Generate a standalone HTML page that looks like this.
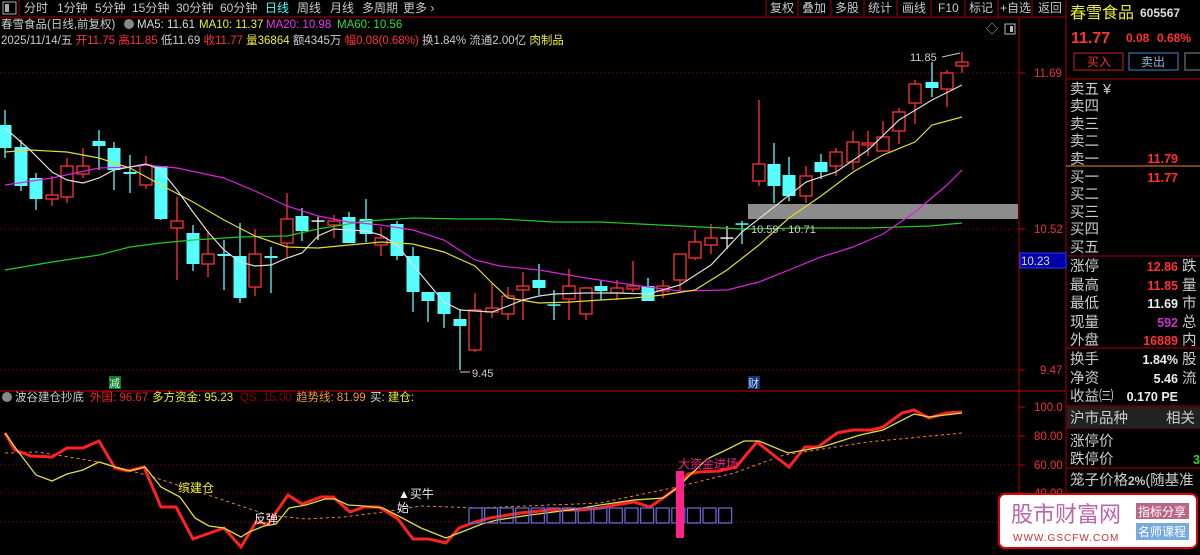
<!DOCTYPE html>
<html><head><meta charset="utf-8"><style>
body{margin:0;background:#000;width:1200px;height:550px;overflow:hidden;font-family:"Liberation Sans","Noto Sans CJK SC",sans-serif;}
svg text{font-family:"Liberation Sans","Noto Sans CJK SC",sans-serif;}
</style></head><body>
<svg id="s" width="1200" height="550" xmlns="http://www.w3.org/2000/svg">
<rect width="1200" height="550" fill="#000"/>
<g font-size="12" fill="#c8c8c8">
<rect x="3" y="2" width="13" height="12" fill="none" stroke="#aaa"/><rect x="5" y="4" width="4" height="8" fill="#aaa"/>
<line x1="19" y1="0" x2="19" y2="16" stroke="#a00"/>
<text x="24" y="12">分时</text><text x="57" y="12">1分钟</text><text x="95" y="12">5分钟</text><text x="132" y="12">15分钟</text><text x="176" y="12">30分钟</text><text x="220" y="12">60分钟</text><text x="265" y="12" fill="#4ff">日线</text><text x="297" y="12">周线</text><text x="330" y="12">月线</text><text x="362" y="12">多周期</text><text x="403" y="12">更多 ›</text>
<g stroke="#a00"><line x1="766" y1="0" x2="766" y2="16"/><line x1="798" y1="0" x2="798" y2="16"/><line x1="831" y1="0" x2="831" y2="16"/><line x1="864" y1="0" x2="864" y2="16"/><line x1="897" y1="0" x2="897" y2="16"/><line x1="931" y1="0" x2="931" y2="16"/><line x1="965" y1="0" x2="965" y2="16"/><line x1="998" y1="0" x2="998" y2="16"/><line x1="1032" y1="0" x2="1032" y2="16"/><line x1="1066" y1="0" x2="1066" y2="550"/></g>
<text x="770" y="12">复权</text><text x="802" y="12">叠加</text><text x="835" y="12">多股</text><text x="868" y="12">统计</text><text x="902" y="12">画线</text><text x="938" y="12">F10</text><text x="969" y="12">标记</text><text x="1000" y="12">+自选</text><text x="1038" y="12">返回</text>
</g>
<line x1="0" y1="17" x2="1066" y2="17" stroke="#a00"/>
<g font-size="11.5">
<text x="1" y="28" fill="#ccc">春雪食品(日线,前复权)</text>
<circle cx="129" cy="24" r="5" fill="#888"/>
<text x="137" y="28" fill="#ddd">MA5: 11.61</text><text x="199" y="28" fill="#ee3">MA10: 11.37</text><text x="266" y="28" fill="#e3e">MA20: 10.98</text><text x="337" y="28" fill="#3d3">MA60: 10.56</text>
<text x="1" y="44" fill="#ccc">2025/11/14/五 <tspan fill="#f33">开11.75</tspan> <tspan fill="#f33">高11.85</tspan> 低11.69 <tspan fill="#f33">收11.77</tspan> <tspan fill="#ee3">量36864</tspan> 额4345万 <tspan fill="#f33">幅0.08(0.68%)</tspan> 换1.84% 流通2.00亿 <tspan fill="#ee3">肉制品</tspan></text>
</g>
<text x="986" y="33" fill="#bbb" font-size="12">◇</text>
<rect x="1005" y="24" width="10" height="10" fill="none" stroke="#bbb"/><rect x="1010" y="26" width="3" height="6" fill="#bbb"/>
<line x1="1019" y1="17" x2="1019" y2="550" stroke="#a00"/>
<line x1="0" y1="391" x2="1066" y2="391" stroke="#c00"/>
<g stroke="#a00" stroke-dasharray="1,3">
<line x1="0" y1="73" x2="1019" y2="73"/><line x1="0" y1="229" x2="1019" y2="229"/><line x1="0" y1="370" x2="1019" y2="370"/>
<line x1="0" y1="436" x2="1019" y2="436"/><line x1="0" y1="465" x2="1019" y2="465"/><line x1="0" y1="493" x2="1019" y2="493"/><line x1="0" y1="522" x2="1019" y2="522"/>
</g>
<g stroke="#c00"><line x1="1019" y1="73" x2="1025" y2="73"/><line x1="1019" y1="229" x2="1025" y2="229"/><line x1="1019" y1="370" x2="1025" y2="370"/><line x1="1019" y1="407" x2="1025" y2="407"/><line x1="1019" y1="436" x2="1025" y2="436"/><line x1="1019" y1="465" x2="1025" y2="465"/><line x1="1019" y1="493" x2="1025" y2="493"/></g>
<g font-size="11.5" fill="#e33"><text x="1034" y="77">11.69</text><text x="1034" y="233">10.52</text><text x="1040" y="374">9.47</text>
<text x="1034" y="411">100.0</text><text x="1034" y="440">80.00</text><text x="1034" y="469">60.00</text><text x="1034" y="497">40.00</text></g>
<rect x="1020" y="253" width="46" height="15" fill="#00a" stroke="#33f"/><text x="1021" y="265" fill="#ddd" font-size="11.5">10.23</text>
<rect x="748" y="204" width="270" height="15" fill="#8c8c8c"/>
<g id="cand"></g>
<g id="ma" fill="none" stroke-width="1.2">
<polyline stroke="#2c2" points="5,270 52,262 99,255 130,247 161,243 193,240 240,237 287,236 318,229 366,221 413,218 460,219 500,219 554,222 600,222 680,226 742,229 806,228 868,228 930,226 962,223"/>
<polyline stroke="#d2d" points="5,185 52,178 99,168 130,167 146,165 177,168 224,178 255,191 287,206 318,216 349,222 381,225 413,230 444,240 475,260 500,266 539,270 586,278 633,285 680,291 727,290 759,282 789,270 821,257 853,247 883,234 915,212 947,185 962,170"/>
<polyline stroke="#dd3" points="5,152 30,150 67,152 99,158 130,168 161,185 193,202 224,220 255,236 287,247 318,248 349,245 381,242 413,244 444,252 475,266 492,283 508,298 539,303 570,302 601,300 633,298 663,295 695,290 727,270 759,245 789,218 821,196 853,172 883,155 915,142 932,125 962,117"/>
<polyline stroke="#ddd" points="5,128 30,150 52,172 67,180 83,183 99,178 114,170 130,167 146,164 161,170 177,190 193,212 208,232 224,250 240,262 255,266 271,265 287,258 302,253 318,236 334,229 349,230 366,231 381,235 397,245 413,265 428,283 444,302 460,310 475,311 492,312 508,306 523,300 539,296 554,294 586,293 617,293 648,294 680,285 711,265 742,232 774,207 806,182 836,172 868,150 899,120 932,100 962,85"/>
</g>
<g font-size="11" fill="#ccc">
<text x="751" y="233">10.59 - 10.71</text>
<text x="910" y="61">11.85</text><line x1="942" y1="57" x2="960" y2="53" stroke="#ccc"/>
<text x="472" y="377">9.45</text><line x1="460" y1="372" x2="470" y2="372" stroke="#ccc"/>
</g>
<rect x="109" y="376" width="12" height="13" fill="#173"/><text x="109" y="387" fill="#cfc" font-size="11">减</text>
<rect x="748" y="376" width="12" height="13" fill="#137"/><text x="748" y="387" fill="#cdf" font-size="11">财</text>
<circle cx="7" cy="397" r="5" fill="#888"/>
<g font-size="11.5"><text x="15" y="401" fill="#ccc">波谷建仓抄底</text><text x="90" y="401" fill="#e22">外国: 96.67</text><text x="152" y="401" fill="#ee3">多方资金: 95.23</text><text x="240" y="401" fill="#800">QS: 15.00</text><text x="296" y="401" fill="#e93">趋势线: 81.99</text><text x="370" y="401" fill="#ddd">买: <tspan fill="#ee3">建仓:</tspan></text></g>
<g fill="none">
<polyline stroke="#e82" stroke-dasharray="3,3" points="5,453 38,452 99,462 153,477 214,497 268,515 306,519 344,517 383,512 421,506 478,508 600,503 677,487 734,473 784,455 868,442 962,433"/>
<polyline stroke="#f22" stroke-width="3" points="5,433 15,450 31,456 52,457 67,448 83,448 99,441 115,468 128,471 144,467 161,507 176,507 193,539 207,534 224,528 241,547 256,522 268,524 288,495 302,504 321,497 333,497 350,512 364,507 379,507 398,519 413,539 429,539 446,543 459,528 475,522 490,518 520,513 550,510 580,510 600,508 615,505 634,502 650,507 663,498 678,487 688,474 699,472 719,471 736,467 757,442 776,457 789,467 805,447 818,447 837,433 853,430 872,430 883,427 902,413 914,410 929,418 946,413 962,412"/>
<polyline stroke="#dd4" stroke-width="1.3" points="5,433 17,450 36,475 52,481 67,474 83,470 99,462 115,467 130,471 145,467 161,487 180,497 195,518 209,526 224,528 241,537 249,532 264,526 276,524 289,508 306,505 325,499 335,499 348,505 364,506 383,508 406,520 421,528 446,538 459,533 482,524 497,520 530,515 570,510 600,505 634,500 663,498 677,488 688,477 707,459 726,450 744,441 759,441 788,453 822,447 860,435 883,430 914,414 929,417 962,413"/>
</g>
<g id="sq" fill="none" stroke="#66c" stroke-width="1.3"></g>
<rect x="676" y="471" width="8" height="67" fill="#f28"/>
<g font-size="12"><text x="678" y="468" fill="#e28">大资金进场</text><text x="178" y="492" fill="#ee3">缤建仓</text><text x="254" y="523" fill="#eee">反弹</text><text x="398" y="498" fill="#eee">▲买牛</text><text x="397" y="512" fill="#eee">始</text></g>
<g font-size="15"><text x="1070" y="18" fill="#ee3" font-size="16">春雪食品</text><text x="1140" y="17" fill="#ddd" font-size="12" font-weight="bold">605567</text>
<text x="1071" y="43" fill="#f33" font-size="16" font-weight="bold">11.77</text><text x="1126" y="42" fill="#f33" font-size="12" font-weight="bold">0.08</text><text x="1157" y="42" fill="#f33" font-size="12" font-weight="bold">0.68%</text></g>
<rect x="1074" y="53" width="49" height="17" fill="none" stroke="#c22"/><text x="1087" y="66" fill="#e33" font-size="12">买入</text>
<rect x="1129" y="53" width="49" height="17" fill="none" stroke="#48c"/><text x="1141" y="66" fill="#8bd" font-size="12">卖出</text>
<rect x="1185" y="53" width="20" height="17" fill="none" stroke="#888"/>
<g stroke="#a00"><line x1="1066" y1="79" x2="1200" y2="79"/><line x1="1066" y1="256" x2="1200" y2="256"/><line x1="1066" y1="348" x2="1200" y2="348"/><line x1="1066" y1="406" x2="1200" y2="406"/><line x1="1066" y1="428" x2="1200" y2="428"/><line x1="1066" y1="468" x2="1200" y2="468"/></g>
<line x1="1066" y1="166" x2="1200" y2="166" stroke="#e82"/>
<rect x="1067" y="407" width="133" height="21" fill="#222"/>
<g font-size="14.5" fill="#ccc">
<text x="1070" y="94">卖五 ¥</text><text x="1070" y="111">卖四</text><text x="1070" y="129">卖三</text><text x="1070" y="146">卖二</text><text x="1070" y="164">卖一</text>
<text x="1070" y="182">买一</text><text x="1070" y="199">买二</text><text x="1070" y="217">买三</text><text x="1070" y="234">买四</text><text x="1070" y="252">买五</text>
<text x="1070" y="271">涨停</text><text x="1070" y="290">最高</text><text x="1070" y="308">最低</text><text x="1070" y="327">现量</text><text x="1070" y="345">外盘</text>
<text x="1070" y="364">换手</text><text x="1070" y="383">净资</text><text x="1070" y="401">收益㈢</text>
<text x="1070" y="423">沪市品种</text><text x="1166" y="423">相关</text>
<text x="1070" y="446">涨停价</text><text x="1070" y="464">跌停价</text>
<text x="1070" y="485">笼子价格<tspan font-size="12" font-weight="bold">2%</tspan>(随基准</text>
<text x="1182" y="271">跌</text><text x="1182" y="290">量</text><text x="1182" y="308">市</text><text x="1182" y="327">总</text><text x="1182" y="345">内</text><text x="1182" y="364">股</text><text x="1182" y="383">流</text>
</g>
<g font-size="12.5" font-weight="bold" text-anchor="end">
<text x="1178" y="163" fill="#f33">11.79</text><text x="1178" y="182" fill="#f33">11.77</text>
<text x="1178" y="271" fill="#f33">12.86</text><text x="1178" y="290" fill="#f33">11.85</text><text x="1178" y="308" fill="#eee">11.69</text><text x="1178" y="327" fill="#c3c">592</text><text x="1178" y="345" fill="#f33">16889</text>
<text x="1178" y="364" fill="#eee">1.84%</text><text x="1178" y="383" fill="#eee">5.46</text><text x="1178" y="401" fill="#eee">0.170 PE</text>
<text x="1200" y="464" fill="#3c3">3</text>
</g>
<rect x="999" y="494" width="198" height="54" rx="6" fill="#fff" stroke="#d00" stroke-width="2"/>
<text x="1011" y="522" fill="#b6a" font-size="22" font-family="Liberation Serif,Noto Serif CJK SC,serif">股市财富网</text>
<text x="1013" y="541" fill="#c33" font-size="10" font-family="Liberation Serif,serif" letter-spacing="1">WWW.GSCFW.COM</text>
<rect x="1136" y="503" width="53" height="16" fill="#b68"/><text x="1138" y="516" fill="#fff" font-size="12">指标分享</text>
<rect x="1136" y="523" width="53" height="17" fill="#7ad"/><text x="1138" y="536" fill="#fff" font-size="12">名师课程</text>
</svg>
<script>
var c=[[5,'c',125,148,110,158],[21,'c',147,186,140,191],[36,'c',178,199,173,210],[52,'r',195,199,176,206],[67,'r',166,197,158,203],[83,'r',166,174,148,178],[99,'c',141,146,130,170],[114,'c',148,170,142,190],[130,'c',172,174,155,193],[146,'r',165,185,156,189],[161,'c',166,219,166,220],[177,'r',221,228,197,280],[193,'c',233,264,225,271],[208,'r',254,264,231,277],[224,'c',254,256,240,290],[240,'c',256,298,223,303],[255,'r',254,287,229,296],[271,'c',256,258,247,293],[287,'r',219,243,193,258],[302,'c',216,231,208,241],[318,'w',221,221,217,240],[334,'r',221,225,215,238],[349,'c',217,243,212,243],[366,'c',219,234,199,242],[381,'r',238,245,227,256],[397,'c',224,256,221,260],[413,'c',256,292,247,312],[428,'c',292,301,292,322],[444,'c',292,314,292,328],[460,'c',319,326,309,370],[475,'r',310,350,293,352],[492,'r',308,312,283,318],[508,'r',296,314,287,320],[523,'r',286,290,272,320],[539,'c',280,288,264,295],[554,'c',305,305,290,320],[569,'r',286,299,269,320],[586,'r',288,314,287,320],[601,'c',286,291,280,300],[617,'r',288,293,280,300],[633,'r',286,289,261,292],[648,'c',286,301,278,301],[663,'r',286,291,280,298],[680,'r',254,280,254,290],[695,'r',242,258,230,260],[711,'r',238,245,224,254],[727,'w',238,238,226,249],[742,'c',224,224,221,244],[759,'r',164,181,100,186],[774,'c',164,186,143,203],[789,'c',175,196,157,201],[806,'r',176,196,166,203],[821,'c',162,172,154,179],[836,'r',152,166,148,176],[853,'r',142,162,131,170],[868,'r',143,145,131,156],[883,'r',137,151,121,151],[899,'r',112,131,108,144],[915,'r',84,103,80,124],[932,'c',82,88,62,97],[947,'r',73,89,70,107],[962,'r',62,66,52,73]];
var h='';c.forEach(function(k){var x=k[0],col=k[1]=='r'?'#f33':(k[1]=='c'?'#5ff':'#eee');
h+='<line x1="'+x+'" y1="'+k[4]+'" x2="'+x+'" y2="'+k[5]+'" stroke="'+col+'" stroke-width="1.3"/>';
var hgt=Math.max(k[3]-k[2],1.5);
if(k[1]=='r')h+='<rect x="'+(x-6)+'" y="'+k[2]+'" width="12" height="'+hgt+'" fill="#000" stroke="'+col+'" stroke-width="1.3"/>';
else h+='<rect x="'+(x-6.5)+'" y="'+(k[2]-(hgt<2?0.7:0))+'" width="13" height="'+hgt+'" fill="'+col+'"/>';});
document.getElementById('cand').innerHTML=h;
var q='';for(var i=0;i<17;i++){q+='<rect x="'+(469+i*15.6)+'" y="508" width="13" height="15"/>';}
document.getElementById('sq').innerHTML=q;
</script>
</body></html>
